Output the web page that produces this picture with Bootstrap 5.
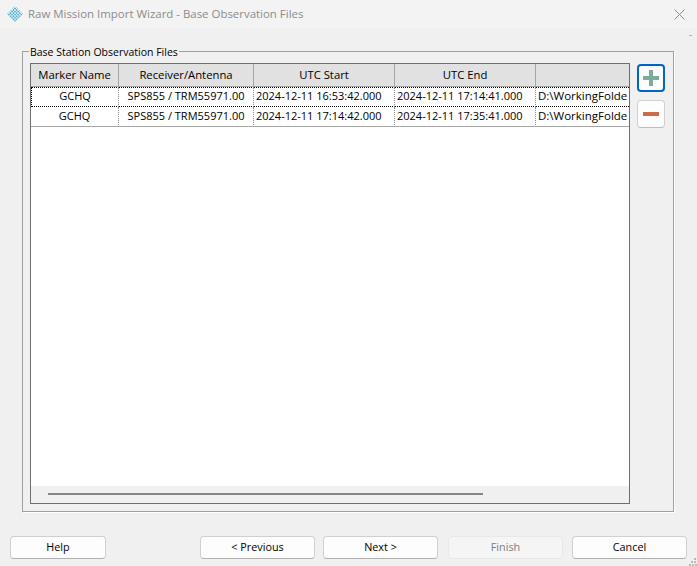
<!DOCTYPE html>
<html lang="en">
<head>
  <meta charset="UTF-8">
  <title>Raw Mission Import Wizard - Base Observation Files</title>
  <link href="https://cdn.jsdelivr.net/npm/bootstrap@5.3.2/dist/css/bootstrap.min.css" rel="stylesheet">
  <style>
    html, body { height: 100%; }
    body { background: #f0f0f0; font-family: "Open Sans", "Noto Sans", sans-serif; font-size: 11px; color: #000; overflow: hidden; }
    .wiz { height: 566px; position: relative; }
    .wiz-title { height: 28px; background: #f3f3f3; color: #8b8b8b; padding-left: 6px; font-size: 11.45px; }
    .wiz-x { margin-right: 12px; }
    .wiz-body { padding: 23px 10px 0 22px; height: 484px; }
    .obs-box { border: 1px solid #a0a0a0; box-shadow: 1px 1px 0 #fff; height: 461px; margin: 0; padding: 11px 8px 8px 7px; position: relative; width: 652px; }
    .obs-box legend { float: none; width: auto; font-size: 10.5px; line-height: 12px; margin: -17px 0 0 -1px; padding: 0 1px; position: absolute; background: #f0f0f0; }
    .grid-wrap { width: 600px; height: 441px; border: 1px solid #6e6e6e; background: #fff; overflow: hidden; }
    .grid-top { height: 422px; overflow: hidden; }
    .file-grid { table-layout: fixed; border-collapse: separate; border-spacing: 0; width: 598px; }
    .file-grid th { background: #e1e1e1; height: 23px; font-size: 11.3px; font-weight: 400; text-align: center; padding: 0; border-right: 1px solid #a5a5a5; border-bottom: 1px solid #a5a5a5; }
    .file-grid th:last-child, .file-grid td:last-child { border-right: 0; }
    .file-grid td { height: 20px; line-height: 15px; padding: 0 0 3px 2px; white-space: nowrap; overflow: hidden; border-right: 1px dotted #8c8c8c; border-bottom: 1px dotted #8c8c8c; }
    .file-grid td.mid { text-align: center; padding: 0 0 3px; }
    .file-grid td.path { font-size: 11.5px; }
    .file-grid tr.cur td { border-top: 1px dotted #000; border-bottom: 1px dotted #000; }
    .file-grid tr.cur td:first-child { border-left: 1px dotted #000; }
    .file-grid tr.nxt td { border-bottom: 1px solid #a8a8a8; }
    .hbar { height: 17px; background: #f0f0f0; padding: 7px 146px 0 17px; }
    .hbar div { height: 2px; background: #868686; }
    .side-btn { width: 28px; height: 28px; background: #fdfdfd; border: 1px solid #d0d0d0; border-bottom-color: #bdbdbd; border-radius: 4px; padding: 0; }
    .side-btn.on { border: 2px solid #0067c0; }
    .side-col { width: 28px; padding-top: 13px; margin-left: -37px; }
    .wiz-foot { padding: 24px 10px 0 10px; }
    .wbtn { height: 23px; width: 115px; background: #fdfdfd; border: 1px solid #d0d0d0; border-bottom-color: #b0b0b0; border-radius: 4px; font-size: 10.8px; line-height: 18px; padding: 0 0 2px; color: #000; }
    .wbtn:disabled { background: #f5f5f5; border-color: #e8e8e8; color: #7c7c88; opacity: 1; }
    .wbtn.help { width: 96px; }
    .wbtn-next { margin: 0 10px 0 8px; }
    .wbtn-cancel { margin-left: 9px; }
    .grip { position: absolute; right: 0; bottom: 0; }
    .tick { position: absolute; right: 5px; top: 35px; width: 3px; height: 1px; background: #b4b4b4; }
  </style>
</head>
<body>

<div class="wiz d-flex flex-column">
  <div class="wiz-title d-flex align-items-center">
    <svg width="18" height="18" viewBox="0 0 18 18">
      <defs>
        <pattern id="dots" width="2.2" height="2.2" patternUnits="userSpaceOnUse" patternTransform="rotate(45 9 9)">
          <rect width="1.6" height="1.6" fill="#4fb0cf"/>
        </pattern>
      </defs>
      <polygon points="9,1 17,9 9,17 1,9" fill="url(#dots)"/>
    </svg>
    <span class="ms-1 flex-grow-1">Raw Mission Import Wizard - Base Observation Files</span>
    <svg class="wiz-x" width="11" height="11" viewBox="0 0 11 11"><path d="M.5.5l10 10M10.5.5l-10 10" stroke="#8f8f8f" fill="none"/></svg>
  </div>
  <div class="tick"></div>

  <div class="wiz-body d-flex">
    <fieldset class="obs-box">
      <legend>Base Station Observation Files</legend>
      <div class="grid-wrap">
        <div class="grid-top">
          <table class="file-grid">
            <colgroup>
              <col style="width:88px"><col style="width:135px"><col style="width:141px"><col style="width:141px"><col>
            </colgroup>
            <thead>
              <tr><th>Marker Name</th><th>Receiver/Antenna</th><th>UTC Start</th><th>UTC End</th><th></th></tr>
            </thead>
            <tbody>
              <tr class="cur">
                <td class="mid">GCHQ</td><td class="mid">SPS855 / TRM55971.00</td>
                <td>2024-12-11 16:53:42.000</td><td>2024-12-11 17:14:41.000</td><td class="path">D:\WorkingFolde</td>
              </tr>
              <tr class="nxt">
                <td class="mid">GCHQ</td><td class="mid">SPS855 / TRM55971.00</td>
                <td>2024-12-11 17:14:42.000</td><td>2024-12-11 17:35:41.000</td><td class="path">D:\WorkingFolde</td>
              </tr>
            </tbody>
          </table>
        </div>
        <div class="hbar"><div></div></div>
      </div>
    </fieldset>
    <div class="side-col d-flex flex-column gap-2">
      <button type="button" class="side-btn on d-flex align-items-center justify-content-center">
        <svg width="16" height="16" viewBox="0 0 16 16"><path d="M6 0h4v6h6v4h-6v6H6v-6H0V6h6z" fill="#7dac9b"/></svg>
      </button>
      <button type="button" class="side-btn d-flex align-items-center justify-content-center">
        <svg width="16" height="4" viewBox="0 0 16 4"><rect width="16" height="4" fill="#cf6a47"/></svg>
      </button>
    </div>
  </div>

  <div class="wiz-foot d-flex">
    <button type="button" class="wbtn help">Help</button>
    <button type="button" class="wbtn ms-auto">&lt; Previous</button>
    <button type="button" class="wbtn wbtn-next">Next &gt;</button>
    <button type="button" class="wbtn" disabled>Finish</button>
    <button type="button" class="wbtn wbtn-cancel">Cancel</button>
  </div>

  <svg class="grip" width="8" height="8" viewBox="0 0 8 8" fill="#b8b8b8">
    <rect x="5" y="0" width="2" height="2"/><rect x="2" y="3" width="2" height="2"/><rect x="5" y="3" width="2" height="2"/>
    <rect x="0" y="6" width="2" height="2"/><rect x="3" y="6" width="2" height="2"/><rect x="6" y="6" width="2" height="2"/>
  </svg>
</div>

<script src="https://cdn.jsdelivr.net/npm/bootstrap@5.3.2/dist/js/bootstrap.bundle.min.js"></script>
</body>
</html>
